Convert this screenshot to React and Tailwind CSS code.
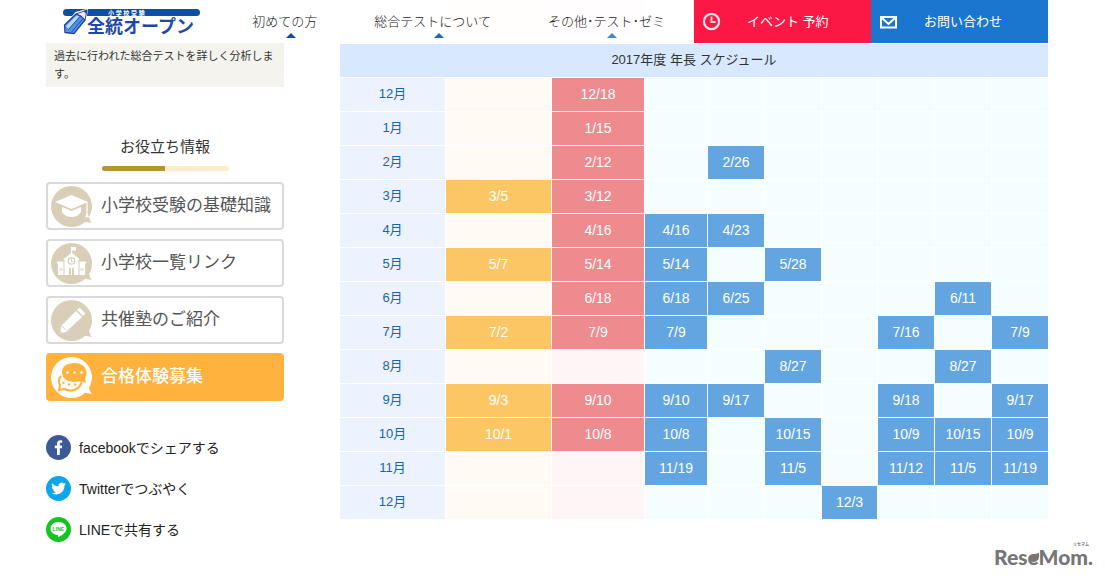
import React from 'react';
import clsx from 'clsx';

const menu = [
  { label: '初めての方', arrow: 'border-b-[#11509c]' },
  { label: '総合テストについて', arrow: 'border-b-[#1b67b5]' },
  { label: 'その他･テスト･ゼミ', arrow: 'border-b-[#3f8ad0]' },
];

const colunas = [
  { width: 'w-[106px]', vazio: 'bg-[#fffaf3]', cheio: 'bg-[#fdc664]' },
  { width: 'w-[93px]', vazio: 'bg-[#fff5f6]', cheio: 'bg-[#ed8b8f]' },
  { width: 'w-[63px]', vazio: 'bg-[#f4feff]', cheio: 'bg-[#63a5e1]' },
  { width: 'w-[57px]', vazio: 'bg-[#f4feff]', cheio: 'bg-[#63a5e1]' },
  { width: 'w-[57px]', vazio: 'bg-[#f4feff]', cheio: 'bg-[#63a5e1]' },
  { width: 'w-[56px]', vazio: 'bg-[#f4feff]', cheio: 'bg-[#63a5e1]' },
  { width: 'w-[57px]', vazio: 'bg-[#f4feff]', cheio: 'bg-[#63a5e1]' },
  { width: 'w-[57px]', vazio: 'bg-[#f4feff]', cheio: 'bg-[#63a5e1]' },
  { width: 'w-[56px]', vazio: 'bg-[#f4feff]', cheio: 'bg-[#63a5e1]' },
];

const meses = [
  ['12月', '', '12/18', '', '', '', '', '', '', ''],
  ['1月', '', '1/15', '', '', '', '', '', '', ''],
  ['2月', '', '2/12', '', '2/26', '', '', '', '', ''],
  ['3月', '3/5', '3/12', '', '', '', '', '', '', ''],
  ['4月', '', '4/16', '4/16', '4/23', '', '', '', '', ''],
  ['5月', '5/7', '5/14', '5/14', '', '5/28', '', '', '', ''],
  ['6月', '', '6/18', '6/18', '6/25', '', '', '', '6/11', ''],
  ['7月', '7/2', '7/9', '7/9', '', '', '', '7/16', '', '7/9'],
  ['8月', '', '', '', '', '8/27', '', '', '8/27', ''],
  ['9月', '9/3', '9/10', '9/10', '9/17', '', '', '9/18', '', '9/17'],
  ['10月', '10/1', '10/8', '10/8', '', '10/15', '', '10/9', '10/15', '10/9'],
  ['11月', '', '', '11/19', '', '11/5', '', '11/12', '11/5', '11/19'],
  ['12月', '', '', '', '', '', '12/3', '', '', ''],
];

function Logo() {
  return (
    <svg width="140" height="30" viewBox="0 0 140 30" role="img" aria-label="全統オープン">
      <rect x="0" y="2" width="137" height="7" rx="3.5" fill="#0d4fa0" />
      <text x="45" y="8" fontSize="6" fontWeight="700" fill="#fff">
        小 学 校 受 験
      </text>
      <path d="M1 20 L13 6 L24 3 L22 13 L11 27 L2 27 Z" fill="#fff" stroke="#fff" strokeWidth="2" />
      <path d="M1.500 18 L13 7 Q18 8 22 13 L11 26.500 L2 25.500 Z" fill="#4f95e6" stroke="#26409f" strokeWidth="1.300" strokeLinejoin="round" />
      <path d="M3 19 L13.500 8.500 L16.500 9.500 L5.500 22 Z" fill="#b4dcfa" />
      <path d="M5.500 22.500 L17 9.500 M8.500 25 L20 11.500" stroke="#26409f" strokeWidth="0.900" />
      <path d="M13 7 L24 3 L22 13 Q19 8 13 7 Z" fill="#f7e6e2" stroke="#26409f" strokeWidth="0.900" />
      <path d="M20.500 4.300 L24.500 2.500 L23.500 7 Z" fill="#26409f" />
      <text x="24" y="26" fontSize="18" fontWeight="700" fill="#1f49a6">
        全統オープン
      </text>
    </svg>
  );
}

function Balao({ fill, children }) {
  return (
    <svg width="41" height="41" viewBox="0 0 41 41" className="shrink-0" aria-hidden="true">
      <circle cx="20.500" cy="20.500" r="20.500" fill={fill} />
      <path d="M38 25 Q37 33 41 37 Q36 37 31 34 Z" fill={fill} />
      {children}
    </svg>
  );
}

const links = [
  {
    label: '小学校受験の基礎知識',
    icon: (
      <Balao fill="#d9cfb8">
        <path d="M20.500 9 L37 16 L20.500 23 L4 16 Z" fill="#fff" />
        <path d="M11 21 L20.500 25 L30 21 V26 Q27 31 20.500 31 Q14 31 11 26 Z" fill="#fff" />
        <path d="M36 16 V27 M36 27 L35 31 H37 Z" stroke="#fff" strokeWidth="1.200" fill="#fff" />
      </Balao>
    ),
  },
  {
    label: '小学校一覧リンク',
    icon: (
      <Balao fill="#d9cfb8">
        <path d="M20 4 H25 V7.500 H21 V10 L29 16.500 H27.500 V32 H13.500 V16.500 H12 L20 10 Z" fill="#fff" />
        <path d="M7 20 H12.500 V32 H7 Z M28.500 20 H34 V32 H28.500 Z M6 18.500 H12.500 V20.500 H6 Z M28.500 18.500 H35 V20.500 H28.500 Z" fill="#fff" />
        <circle cx="20.500" cy="18" r="3.200" fill="#fff" stroke="#d9cfb8" strokeWidth="1.300" />
        <path d="M20.500 16 V18.500 H22" stroke="#d9cfb8" fill="none" />
        <path d="M18 25 H20 V32 H18 Z M21 25 H23 V32 H21 Z M8.500 25 H9.500 V28 H8.500 Z M10.500 25 H11.500 V28 H10.500 Z M29.500 25 H30.500 V28 H29.500 Z M31.500 25 H32.500 V28 H31.500 Z" fill="#d9cfb8" />
      </Balao>
    ),
  },
  {
    label: '共催塾のご紹介',
    icon: (
      <Balao fill="#d9cfb8">
        <path d="M27.500 8.500 Q28.500 7.500 29.500 8.500 L33.500 12.500 Q34.500 13.500 33.500 14.500 L32 16 L26 10 Z" fill="#fff" />
        <path d="M25 11 L31 17 L15.500 31.500 L9 33.500 L10.500 25.500 Z" fill="#fff" />
        <path d="M11 26 L15 30.500" stroke="#d9cfb8" strokeWidth="1" />
        <path d="M9 33.500 L9.500 31 L11.500 33 Z" fill="#d9cfb8" />
      </Balao>
    ),
  },
  {
    label: '合格体験募集',
    destaque: true,
    icon: (
      <Balao fill="#fff">
        <path d="M10 19 Q6.500 23 9 28 L8 33 L13 32 Q21 36 28 30 Q31 27 30.500 23" fill="none" stroke="#ffb23e" strokeWidth="2" />
        <path d="M23.500 6 C15 6 11 10 11 15.500 C11 21 16 25 23.500 25 L30 24 L35 26 L34 21 Q36 18 35.500 15 C35 10 31 6 23.500 6 Z" fill="#ffb23e" />
        <g fill="#fff">
          <circle cx="16.500" cy="15.500" r="1.300" />
          <circle cx="23.500" cy="15.500" r="1.300" />
          <circle cx="30.500" cy="15.500" r="1.300" />
        </g>
        <g fill="#ffb23e">
          <circle cx="12.500" cy="26" r="1.200" />
          <circle cx="18" cy="27.500" r="1.200" />
          <circle cx="24" cy="27.500" r="1.200" />
        </g>
      </Balao>
    ),
  },
];

const redes = [
  {
    label: 'facebookでシェアする',
    icon: (
      <svg width="25" height="25" viewBox="0 0 25 25" className="shrink-0" aria-hidden="true">
        <circle cx="12.500" cy="12.500" r="12.500" fill="#3d5a98" />
        <path d="M11 20 V13.300 H8.800 V10.600 H11 V8.800 C11 6.500 12.300 5.300 14.300 5.300 L16.200 5.400 V7.800 H15 C14 7.800 13.800 8.300 13.800 9 V10.600 H16.200 L15.800 13.300 H13.800 V20 Z" fill="#fff" />
      </svg>
    ),
  },
  {
    label: 'Twitterでつぶやく',
    icon: (
      <svg width="25" height="25" viewBox="0 0 25 25" className="shrink-0" aria-hidden="true">
        <circle cx="12.500" cy="12.500" r="12.500" fill="#0ea5ea" />
        <path
          transform="translate(5.300 5.200) scale(0.610)"
          d="M23.950 4.570a10 10 0 0 1-2.820.770 4.960 4.960 0 0 0 2.160-2.720 9.900 9.900 0 0 1-3.120 1.180 4.920 4.920 0 0 0-8.380 4.480C7.690 8.090 4.070 6.130 1.640 3.160a4.920 4.920 0 0 0 1.520 6.570 4.900 4.900 0 0 1-2.230-.61v.06a4.920 4.920 0 0 0 3.950 4.830 4.990 4.990 0 0 1-2.210.08 4.940 4.940 0 0 0 4.600 3.420A9.870 9.870 0 0 1 0 19.540a13.990 13.990 0 0 0 7.550 2.210c9.050 0 14-7.500 14-13.980 0-.21 0-.42-.02-.63a9.940 9.940 0 0 0 2.420-2.570z"
          fill="#fff"
        />
      </svg>
    ),
  },
  {
    label: 'LINEで共有する',
    icon: (
      <svg width="25" height="25" viewBox="0 0 25 25" className="shrink-0" aria-hidden="true">
        <circle cx="12.500" cy="12.500" r="12.500" fill="#12c51f" />
        <path d="M12.500 5 C7.500 5 4.500 8 4.500 11.700 C4.500 15 7.500 17.600 11.300 18 C12.500 18.200 12 19 11.900 20.300 C14.500 19 20.500 15.800 20.500 11.700 C20.500 8 17.500 5 12.500 5 Z" fill="#fff" />
        <text x="12.500" y="13.700" fontSize="5" fontWeight="700" textAnchor="middle" fill="#12c51f">
          LINE
        </text>
      </svg>
    ),
  },
];

function Header() {
  return (
    <header className="absolute inset-x-0 top-0 z-10 flex h-[43px] bg-white/75 pl-[63px] pr-[57px] text-[13px] text-[#222]">
      <a href="#top" className="mt-[7px]">
        <Logo />
      </a>
      <nav className="ml-auto mr-[29px] font-light">
        <ul className="flex gap-[57px]">
          {menu.map((m) => (
            <li key={m.label}>
              <a href="#menu" className="flex flex-col items-center whitespace-nowrap pt-3 leading-5">
                {m.label}
                <span className={clsx('ml-3 mt-px border-x-[5px] border-b-[5px] border-x-transparent', m.arrow)} />
              </a>
            </li>
          ))}
        </ul>
      </nav>
      <a href="#event" className="flex w-[177px] items-center gap-[26px] bg-[#fb1844] pl-2 text-white">
        <svg width="19" height="19" viewBox="0 0 19 19" fill="none" stroke="#ffe3e8" aria-hidden="true">
          <circle cx="9.500" cy="9.500" r="7.600" strokeWidth="2.200" />
          <path d="M9.500 4.500 V10 H13.500" strokeWidth="1.800" />
        </svg>
        イベント 予約
      </a>
      <a href="#contact" className="flex w-[177px] items-center gap-[26px] bg-[#1b76cf] pl-2 text-white">
        <svg width="19" height="14" viewBox="0 0 19 14" fill="none" stroke="#fff" strokeWidth="2" aria-hidden="true">
          <path d="M2 2 H17 V12.500 H2 Z" />
          <path d="M3 3 L9.500 9 L16 3" />
        </svg>
        お問い合わせ
      </a>
    </header>
  );
}

function Sidebar() {
  return (
    <aside className="w-[238px] shrink-0 pt-[43px]">
      <p className="bg-[#f4f3ee] px-2 py-1 text-[11px] leading-[18px] text-[#333]">
        過去に行われた総合テストを詳しく分析します。
      </p>

      <h2 className="mt-12 text-center text-[15px] leading-6 text-[#333]">お役立ち情報</h2>
      <div className="mx-auto mt-[7px] flex h-[5px] w-[127px] overflow-hidden rounded-full bg-[#fdedc6]">
        <div className="w-1/2 bg-[#b8942f]" />
      </div>

      <ul className="mt-[11px] flex flex-col gap-[9px]">
        {links.map((l) => (
          <li key={l.label}>
            <a
              href="#info"
              className={clsx(
                'flex h-12 items-center gap-[9px] whitespace-nowrap rounded border-2 pl-[3px] text-[17px]',
                l.destaque ? 'border-[#ffb23e] bg-[#ffb23e] font-medium text-white' : 'border-[#dadada] bg-white text-[#555]'
              )}
            >
              {l.icon}
              {l.label}
            </a>
          </li>
        ))}
      </ul>

      <ul className="mt-[34px] flex flex-col gap-4">
        {redes.map((r) => (
          <li key={r.label}>
            <a href="#share" className="flex h-[25px] items-center gap-2 text-sm text-[#222]">
              {r.icon}
              {r.label}
            </a>
          </li>
        ))}
      </ul>
    </aside>
  );
}

function Schedule() {
  return (
    <table className="w-full table-fixed border-separate border-spacing-0 text-center text-[13px]">
      <colgroup>
        <col className="w-[106px]" />
        {colunas.map((c, i) => (
          <col key={i} className={c.width} />
        ))}
      </colgroup>
      <thead>
        <tr className="h-[43px]">
          <td />
          {colunas.map((c, i) => (
            <td key={i} className={i < 2 ? c.vazio : 'bg-white'} />
          ))}
        </tr>
        <tr className="h-[34px]">
          <th colSpan={10} className="border-t border-white bg-[#d7e8ff] p-0 pb-0.5 font-normal text-[#333]">
            2017年度 年長 スケジュール
          </th>
        </tr>
      </thead>
      <tbody>
        {meses.map(([mes, ...datas], i) => (
          <tr key={i} className="h-[34px]">
            <th className="border-r border-t border-white bg-[#ecf3ff] p-0 pb-0.5 font-normal text-[#1565b0]">{mes}</th>
            {datas.map((d, j) => (
              <td
                key={j}
                className={clsx(
                  'border-r border-t border-white p-0 pb-0.5 text-sm text-white last:border-r-0',
                  d ? colunas[j].cheio : colunas[j].vazio
                )}
              >
                {d}
              </td>
            ))}
          </tr>
        ))}
      </tbody>
    </table>
  );
}

export default function App() {
  return (
    <div className="relative min-h-screen bg-white font-['Liberation_Sans','Noto_Sans_CJK_JP',sans-serif]">
      <Header />
      <main className="flex gap-14 pl-[46px] pr-[57px]">
        <Sidebar />
        <section className="min-w-0 flex-1">
          <Schedule />
        </section>
      </main>
      <footer className="flex justify-end pr-3">
        <svg width="98" height="28" viewBox="0 0 98 28" fill="#767676" role="img" aria-label="ReseMom">
          <text x="-1" y="23" fontSize="21" fontWeight="900" fontFamily="Lato, sans-serif">
            ReseMom.
          </text>
          <path d="M35 19 Q35 12 44 11 Q45 20 38 20 Z" />
          <text x="78" y="4" fontSize="4" fontWeight="700">
            リセマム
          </text>
        </svg>
      </footer>
    </div>
  );
}
